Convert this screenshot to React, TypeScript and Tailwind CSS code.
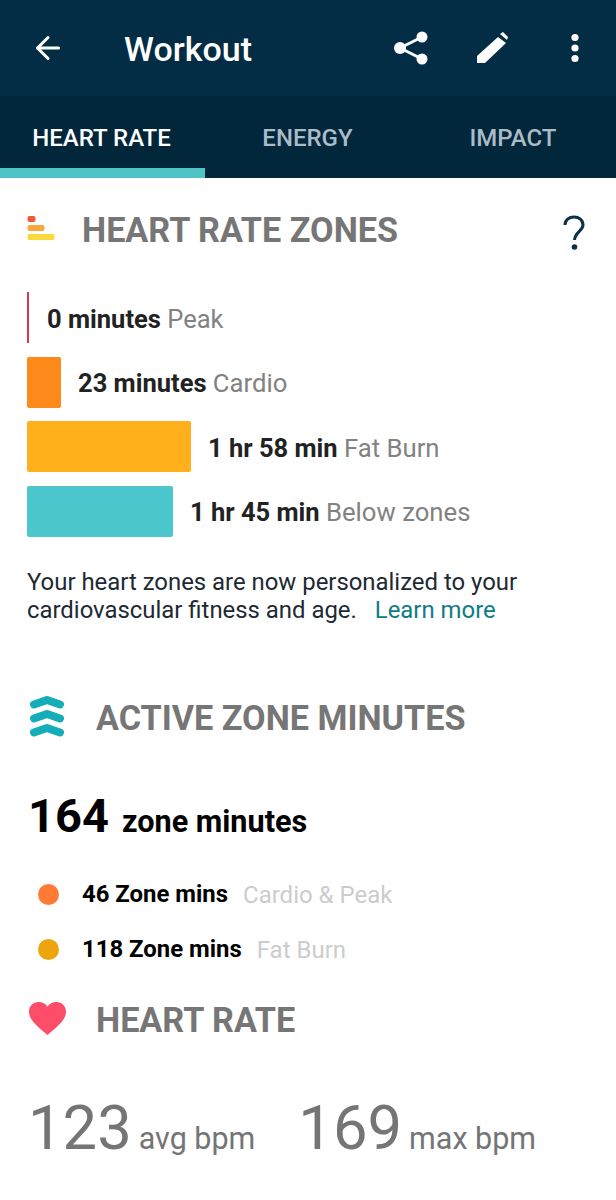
import { ArrowLeft } from "lucide-react";

const zones = [
  { bar: "w-[34px] bg-[#ff8a1c]", time: "23 minutes", label: "Cardio" },
  { bar: "w-[164px] bg-[#ffb01b]", time: "1 hr 58 min", label: "Fat Burn" },
  { bar: "w-[146px] bg-[#4cc7ce]", time: "1 hr 45 min", label: "Below zones" },
];

const App = () => {
  return (
    <div className="w-[616px] h-[1200px] overflow-hidden bg-white font-['Roboto',sans-serif]">
      <header className="h-[96px] bg-[#032c45] flex items-center pl-[30px] pr-[36px] text-white">
        <ArrowLeft className="w-[36px] h-[36px]" strokeWidth={2} />
        <h1 className="ml-[58px] mt-[3px] text-[34px] font-medium flex-grow">Workout</h1>
        <svg viewBox="0 0 36 36" className="w-[36px] h-[36px] mr-[47px]" fill="white">
          <circle cx="29" cy="7" r="5.5" />
          <circle cx="7" cy="18" r="6" />
          <circle cx="29" cy="29" r="5.5" />
          <path d="M7 18 29 7M7 18l22 11" stroke="white" strokeWidth="3" />
        </svg>
        <svg viewBox="0 0 36 36" className="w-[36px] h-[36px] mr-[58px]" fill="white">
          <path d="M1 33V26L22 7l8 6L9 33z" />
          <path d="M24 4l3-2 5 5-1 3z" />
        </svg>
        <svg viewBox="0 0 10 34" className="w-[10px] h-[34px]" fill="white">
          <circle cx="5" cy="6.500" r="3.600" />
          <circle cx="5" cy="17" r="3.600" />
          <circle cx="5" cy="27.500" r="3.600" />
        </svg>
      </header>

      <nav className="h-[82px] bg-[#02263a] flex text-[24px] font-medium">
        <div className="w-[205px] flex flex-col">
          <div className="flex-grow pt-[24px] pr-[2px] text-center text-white">HEART RATE</div>
          <div className="h-[10px] bg-[#4fc4c6]" />
        </div>
        <div className="w-[205px] flex items-start justify-center pt-[24px] text-[#a9bcc8]">ENERGY</div>
        <div className="w-[206px] flex items-start justify-center pt-[24px] text-[#a9bcc8]">IMPACT</div>
      </nav>

      <section className="px-[27px]">
        <div className="h-[104px] flex items-center">
          <svg viewBox="0 0 28 24" className="w-[28px] h-[24px] mb-[4px]">
            <rect x="0.5" y="0" width="8" height="6" rx="2" fill="#ee5a35" />
            <rect x="0.5" y="9" width="17" height="6" rx="2" fill="#fba63a" />
            <rect x="0.5" y="18" width="27" height="6" rx="2" fill="#fbd83c" />
          </svg>
          <h2 className="ml-[27px] mt-[1px] text-[34.2px] font-bold text-[#767676] flex-grow">HEART RATE ZONES</h2>
          <svg viewBox="0 0 24 36" className="w-[24px] h-[36px] mr-[3px] mt-[6px]" fill="none">
            <path d="M3 10C3 5 7 2 12 2s9 3 9 8c0 6-8 7-8.500 15" stroke="#0c3247" strokeWidth="3" />
            <circle cx="12.500" cy="32" r="2.800" fill="#0c3247" />
          </svg>
        </div>

        <div className="h-[51px] flex items-center mt-[10px]">
          <div className="w-[2px] h-[51px] bg-[#d8384f]" />
          <p className="ml-[18px] pt-[4px] text-[25.5px]">
            <span className="font-bold text-[#222222]">0 minutes</span>{" "}
            <span className="text-[#828282]">Peak</span>
          </p>
        </div>
        {zones.map((zone) => (
          <div key={zone.label} className="h-[51px] flex items-center mt-[13.500px]">
            <div className={`h-[51px] rounded-[2px] ${zone.bar}`} />
            <p className="ml-[17px] pt-[3px] text-[25.5px]">
              <span className="font-bold text-[#222222]">{zone.time}</span>{" "}
              <span className="text-[25.7px] text-[#828282]">{zone.label}</span>
            </p>
          </div>
        ))}

        <p className="mt-[31px] text-[23.900px] leading-[28px] text-[#1d2a33]">
          Your heart zones are now personalized to your
          <br />
          cardiovascular fitness and age.
          <span className="ml-[18px] text-[#0e7c86]">Learn more</span>
        </p>
      </section>

      <section className="pl-[28px] pr-[28px] mt-[70px]">
        <div className="flex items-center h-[46px]">
          <svg viewBox="0 0 36 42" className="ml-[1px] w-[36px] h-[42px]" fill="none" stroke="#14adb8" strokeWidth="8" strokeLinecap="round" strokeLinejoin="round">
            <path d="M5 8.500 18 4 31 8.500" />
            <path d="M5 22.500 18 18l13 4.500" />
            <path d="M5 36.500 18 32l13 4.500" />
          </svg>
          <h2 className="ml-[31px] mt-[4px] text-[34.2px] font-bold text-[#767676]">ACTIVE ZONE MINUTES</h2>
        </div>

        <p className="mt-[46px] flex items-baseline text-black font-bold">
          <span className="text-[47px] leading-[60px]">164</span>
          <span className="ml-[13px] text-[30.600px] font-bold">zone minutes</span>
        </p>

        <div className="mt-[29px] ml-[10px] flex items-center h-[40px]">
          <div className="w-[21px] h-[21px] rounded-full bg-[#ff7b35]" />
          <span className="ml-[23px] text-[23.900px] font-bold text-black">46 Zone mins</span>
          <span className="ml-[15px] text-[24px] text-[#cccccc]">Cardio &amp; Peak</span>
        </div>
        <div className="mt-[15px] ml-[10px] flex items-center h-[40px]">
          <div className="w-[21px] h-[21px] rounded-full bg-[#eca50c]" />
          <span className="ml-[23px] text-[23.900px] font-bold text-black">118 Zone mins</span>
          <span className="ml-[15px] text-[24px] text-[#cccccc]">Fat Burn</span>
        </div>

        <div className="mt-[28px] flex items-center h-[46px]">
          <svg viewBox="0 0 36 32" className="ml-[1px] w-[37px] h-[33px] mb-[4px]" fill="#fd4d68">
            <path d="M18 32C10 25 0 18 0 9.500 0 4 4 0 9.500 0 13 0 16 1.500 18 4.500 20 1.500 23 0 26.500 0 32 0 36 4 36 9.500 36 18 26 25 18 32z" />
          </svg>
          <h2 className="ml-[30px] text-[34.2px] font-bold text-[#767676]">HEART RATE</h2>
        </div>

        <p className="mt-[49px] flex items-baseline text-[#757575]">
          <span className="text-[61.500px] leading-[70px]">123</span>
          <span className="ml-[7px] text-[30.500px]">avg bpm</span>
          <span className="ml-[43px] text-[61.500px] leading-[70px]">169</span>
          <span className="ml-[7px] text-[30.500px]">max bpm</span>
        </p>
      </section>
    </div>
  );
};

export default App;
